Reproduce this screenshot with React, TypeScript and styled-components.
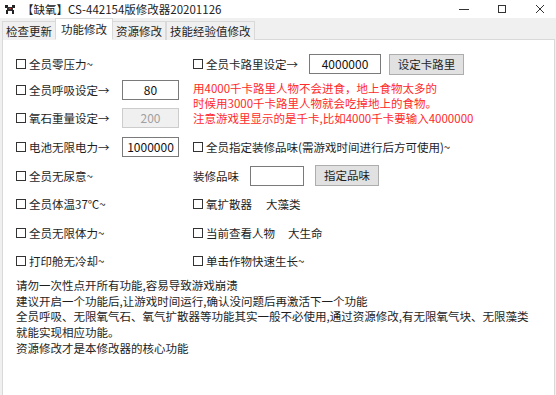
import React from "react";
import styled, { createGlobalStyle } from "styled-components";

const GlobalStyle = createGlobalStyle`
  html, body {
    margin: 0;
    padding: 0;
    background: #f0f0f0;
  }
  body {
    font-family: "Noto Sans CJK SC", "Noto Sans", sans-serif;
    font-size: 11.5px;
    color: #1e1e1e;
  }
`;

const Window = styled.div`
  width: 556px;
  height: 395px;
  display: flex;
  flex-direction: column;
  background: #f0f0f0;
  overflow: hidden;
`;

const TitleBar = styled.div`
  height: 18px;
  background: #fff;
  display: flex;
  align-items: center;
  padding-left: 4px;
  gap: 6px;
  font-size: 11.5px;
  color: #222;
`;

const TitleText = styled.span`
  flex: 1;
  line-height: 18px;
`;

const WinButton = styled.span`
  width: 32px;
  display: flex;
  justify-content: center;
  align-items: center;
`;

const TabStrip = styled.div`
  height: 22px;
  display: flex;
  align-items: flex-end;
  padding-left: 2px;
  position: relative;
  z-index: 1;
`;

const Tab = styled.div<{ $active?: boolean }>`
  height: ${(p) => (p.$active ? 22 : 19)}px;
  line-height: ${(p) => (p.$active ? 20 : 18)}px;
  padding: 0 ${(p) => (p.$active ? 5 : 3)}px;
  margin: 0 ${(p) => (p.$active ? -1 : 0)}px;
  background: ${(p) => (p.$active ? "#fff" : "#f0f0f0")};
  border: 1px solid #d9d9d9;
  border-bottom: ${(p) => (p.$active ? "1px solid #fff" : "none")};
  font-size: 11.5px;
  color: #1e1e1e;
  box-sizing: border-box;
  white-space: nowrap;
  position: relative;
  z-index: ${(p) => (p.$active ? 2 : 1)};
`;

const Page = styled.div`
  flex: 1;
  margin: -1px 1px 0 2px;
  background: #fff;
  border: 1px solid #d9d9d9;
  border-bottom: none;
  padding: 12px 0 0 13px;
`;

const Grid = styled.div`
  display: grid;
  grid-template-columns: 177px 1fr;
  grid-template-rows: 24px 28px 28px 29px 29px 28px 29px 28px;
`;

const Row = styled.div<{ $span?: number }>`
  display: flex;
  align-items: center;
  white-space: nowrap;
  ${(p) => (p.$span ? `grid-row: span ${p.$span};` : "")}
`;

const Box = styled.span`
  width: 8px;
  height: 8px;
  border: 1px solid #333;
  margin-right: 3px;
  flex-shrink: 0;
`;

const Label = styled.span<{ $width?: number; $gap?: number }>`
  ${(p) => (p.$width ? `width: ${p.$width}px;` : "")}
  ${(p) => (p.$gap ? `margin-right: ${p.$gap}px;` : "")}
  flex-shrink: 0;
`;

const Input = styled.div<{ $width: number; $disabled?: boolean }>`
  width: ${(p) => p.$width}px;
  height: 20px;
  box-sizing: border-box;
  border: 1px solid ${(p) => (p.$disabled ? "#cccccc" : "#7a7a7a")};
  background: ${(p) => (p.$disabled ? "#f0f0f0" : "#fff")};
  color: ${(p) => (p.$disabled ? "#a0a0a0" : "#111")};
  text-align: center;
  line-height: 18px;
  font-size: 12px;
`;

const Button = styled.div<{ $width: number; $gap?: number }>`
  width: ${(p) => p.$width}px;
  height: 21px;
  margin-left: ${(p) => p.$gap ?? 8}px;
  box-sizing: border-box;
  border: 1px solid #adadad;
  background: #e1e1e1;
  text-align: center;
  line-height: 19px;
  color: #1e1e1e;
`;

const Warning = styled.div`
  grid-row: span 2;
  color: #ff2a2a;
  line-height: 15px;
  padding-top: 5px;
  white-space: nowrap;
`;

const Notes = styled.div`
  margin-top: 3px;
  line-height: 15.7px;
  color: #1e1e1e;
  white-space: nowrap;
`;

function Check({ text, gap }: { text: string; gap?: number }) {
  return (
    <>
      <Box />
      <Label $gap={gap}>{text}</Label>
    </>
  );
}

function AppIcon() {
  return (
    <svg width="12" height="11" viewBox="0 0 12 11">
      <rect x="1" y="1" width="3" height="3" fill="#222" />
      <rect x="8" y="1" width="3" height="3" fill="#222" />
      <rect x="3" y="3" width="6" height="4" fill="#333" />
      <rect x="2" y="6" width="2" height="4" fill="#222" />
      <rect x="8" y="6" width="2" height="4" fill="#222" />
      <rect x="5" y="4" width="2" height="1" fill="#d33" />
    </svg>
  );
}

export default function App() {
  return (
    <Window>
      <GlobalStyle />
      <TitleBar>
        <AppIcon />
        <TitleText>【缺氧】CS-442154版修改器20201126</TitleText>
        <WinButton>
          <svg width="10" height="10" viewBox="0 0 10 10">
            <path d="M0 5.5h10" stroke="#333" strokeWidth="1" />
          </svg>
        </WinButton>
        <WinButton>
          <svg width="10" height="10" viewBox="0 0 10 10">
            <rect x="1.5" y="1.5" width="7" height="7" fill="none" stroke="#333" />
          </svg>
        </WinButton>
        <WinButton>
          <svg width="10" height="10" viewBox="0 0 10 10">
            <path d="M1 1l8 8M9 1l-8 8" stroke="#333" strokeWidth="1" />
          </svg>
        </WinButton>
      </TitleBar>

      <TabStrip>
        <Tab>检查更新</Tab>
        <Tab $active>功能修改</Tab>
        <Tab>资源修改</Tab>
        <Tab>技能经验值修改</Tab>
      </TabStrip>

      <Page>
        <Grid>
          <Row>
            <Check text="全员零压力~" />
          </Row>
          <Row>
            <Box />
            <Label $width={103}>全员卡路里设定→</Label>
            <Input $width={72}>4000000</Input>
            <Button $width={75}>设定卡路里</Button>
          </Row>

          <Row>
            <Box />
            <Label $width={93}>全员呼吸设定→</Label>
            <Input $width={57}>80</Input>
          </Row>
          <Warning>
            用4000千卡路里人物不会进食，地上食物太多的
            <br />
            时候用3000千卡路里人物就会吃掉地上的食物。
            <br />
            注意游戏里显示的是千卡,比如4000千卡要输入4000000
          </Warning>

          <Row>
            <Box />
            <Label $width={93}>氧石重量设定→</Label>
            <Input $width={57} $disabled>
              200
            </Input>
          </Row>

          <Row>
            <Box />
            <Label $width={93}>电池无限电力→</Label>
            <Input $width={57}>1000000</Input>
          </Row>
          <Row>
            <Check text="全员指定装修品味(需游戏时间进行后方可使用)~" />
          </Row>

          <Row>
            <Check text="全员无尿意~" />
          </Row>
          <Row>
            <Label $width={57}>装修品味</Label>
            <Input $width={54} />
            <Button $width={64} $gap={11}>
              指定品味
            </Button>
          </Row>

          <Row>
            <Check text="全员体温37℃~" />
          </Row>
          <Row>
            <Check text="氧扩散器" gap={14} />
            <Label>大藻类</Label>
          </Row>

          <Row>
            <Check text="全员无限体力~" />
          </Row>
          <Row>
            <Check text="当前查看人物" gap={13} />
            <Label>大生命</Label>
          </Row>

          <Row>
            <Check text="打印舱无冷却~" />
          </Row>
          <Row>
            <Check text="单击作物快速生长~" />
          </Row>
        </Grid>

        <Notes>
          请勿一次性点开所有功能,容易导致游戏崩溃
          <br />
          建议开启一个功能后,让游戏时间运行,确认没问题后再激活下一个功能
          <br />
          全员呼吸、无限氧气石、氧气扩散器等功能其实一般不必使用,通过资源修改,有无限氧气块、无限藻类
          <br />
          就能实现相应功能。
          <br />
          资源修改才是本修改器的核心功能
        </Notes>
      </Page>
    </Window>
  );
}
